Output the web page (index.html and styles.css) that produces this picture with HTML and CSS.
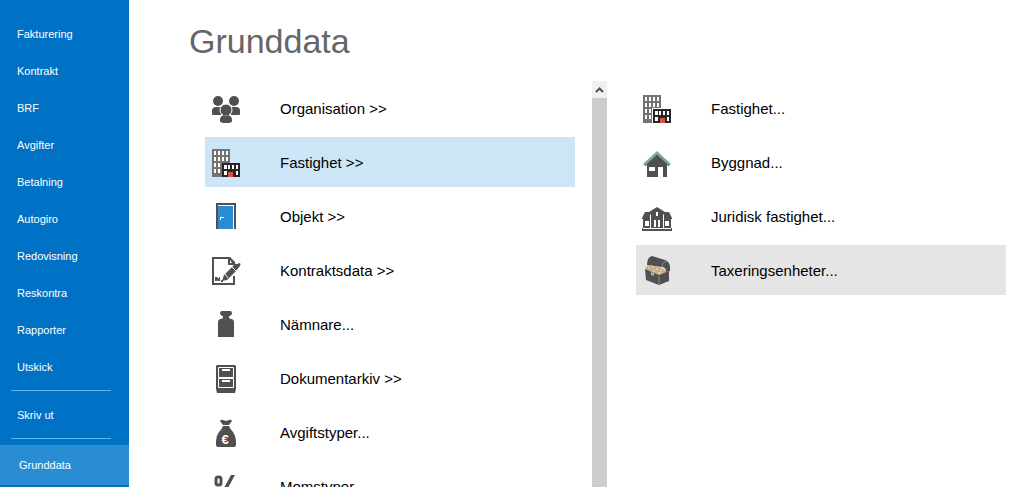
FILE: index.html
```html
<!DOCTYPE html>
<html lang="sv">
<head>
    <meta charset="UTF-8">
    <meta name="viewport" content="width=device-width, initial-scale=1.0">
    <title>Grunddata</title>
    <link rel="stylesheet" href="styles.css">
</head>
<body>
    <nav class="sidebar">
        <a href="#">Fakturering</a>
        <a href="#">Kontrakt</a>
        <a href="#">BRF</a>
        <a href="#">Avgifter</a>
        <a href="#">Betalning</a>
        <a href="#">Autogiro</a>
        <a href="#">Redovisning</a>
        <a href="#">Reskontra</a>
        <a href="#">Rapporter</a>
        <a href="#">Utskick</a>
        <hr>
        <a href="#">Skriv ut</a>
        <hr>
        <a href="#" class="active">Grunddata</a>
    </nav>

    <main class="content">
        <h1>Grunddata</h1>
        <div class="panels">
            <div class="menu">
                <a href="#" class="menu-item">
                    <svg class="icon" viewBox="0 0 32 32">
                        <circle cx="8" cy="9" r="5"/>
                        <circle cx="24" cy="9" r="5"/>
                        <path d="M2 22v-3q0-4 4-4h5v8H3q-1 0-1-1zM30 22v-3q0-4-4-4h-5v8h8q1 0 1-1z"/>
                        <circle class="halo" cx="16" cy="18" r="6"/>
                        <path d="M10 28q0-4 4-5q2 1 4 0q4 1 4 5v1q0 2-6 2t-6-2z"/>
                    </svg>
                    <span>Organisation &gt;&gt;</span>
                </a>
                <a href="#" class="menu-item selected">
                    <svg class="icon" viewBox="0 0 32 32">
                        <path class="grey" d="M2 3h18v28H2z"/>
                        <path class="white" d="M4 5h2v4H4zM8 5h2v4H8zM12 5h2v4h-2zM16 5h2v4h-2zM4 11h2v4H4zM8 11h2v4H8zM12 11h2v4h-2zM16 11h2v4h-2zM4 17h2v4H4zM8 17h2v4H8zM4 23h2v4H4zM8 23h2v4H8z"/>
                        <path class="black" d="M12 17h18v14H12z"/>
                        <path class="white" d="M14 19h3v4h-3zM18 19h2v4h-2zM22 19h2v4h-2zM26 19h2v4h-2zM14 25h3v4h-3zM26 25h2v4h-2z"/>
                        <path class="red" d="M18 26h5v5h-5z"/>
                    </svg>
                    <span>Fastighet &gt;&gt;</span>
                </a>
                <a href="#" class="menu-item">
                    <svg class="icon" viewBox="0 0 32 32">
                        <path d="M6 3h20v26H6z"/>
                        <path class="white" d="M8 5h16v24H8z"/>
                        <path class="blue" d="M8 6h15v23H8z"/>
                        <path class="white" d="M10 17h4v1h-3v2h-1z"/>
                    </svg>
                    <span>Objekt &gt;&gt;</span>
                </a>
                <a href="#" class="menu-item">
                    <svg class="icon" viewBox="0 0 32 32">
                        <path class="line" d="M24 22v8H3V4h16l5 5"/>
                        <path d="M18 3h2l5 5v3h-7z"/>
                        <path class="white" d="M20 6l2 3h-2z"/>
                        <path d="M12 27l2-6 10-10q2-2 3-1l3-1q1 1 0 3l-4 5-3 3-6 6z"/>
                        <path class="thin-white" d="M15 20l3 4M22 13l4 4"/>
                        <path d="M5 23h2l2 2v-2h1v4H8l-1-1v1H5zM11 26h2v2h-2z"/>
                    </svg>
                    <span>Kontraktsdata &gt;&gt;</span>
                </a>
                <a href="#" class="menu-item">
                    <svg class="icon" viewBox="0 0 32 32">
                        <path d="M12 3h8q2 0 2 2t-2 3h-1v1q0 2 2 2h1q2 1 2 3v15H8V14q0-2 2-3h1q2 0 2-2V8h-1q-2-1-2-3t2-2z"/>
                    </svg>
                    <span>Nämnare...</span>
                </a>
                <a href="#" class="menu-item">
                    <svg class="icon" viewBox="0 0 32 32">
                        <path d="M7 3h18l1 1v23l-1 4H7l-1-4V4z"/>
                        <path class="thin-white" d="M8.500 5.500h15v10h-15zM8.500 16.500h15v9h-15z"/>
                        <path class="white" d="M12 7h8v2h-8zM12 18h8v2h-8z"/>
                    </svg>
                    <span>Dokumentarkiv &gt;&gt;</span>
                </a>
                <a href="#" class="menu-item">
                    <svg class="icon" viewBox="0 0 32 32">
                        <path d="M10 5q1-2 3-1l3 1 3-1q2-1 3 1l-3 4h-6z"/>
                        <path d="M13 10h6q1 3 4 6 3 4 3 9v4q0 2-2 2H8q-2 0-2-2v-4q0-5 3-9 3-3 4-6z"/>
                        <text class="euro" x="15" y="28">€</text>
                    </svg>
                    <span>Avgiftstyper...</span>
                </a>
                <a href="#" class="menu-item">
                    <svg class="icon" viewBox="0 0 32 32">
                        <rect class="ring" x="6" y="7" width="5" height="8" rx="2"/>
                        <rect class="ring" x="20" y="19" width="5" height="8" rx="2"/>
                        <path d="M21 5h4L12 29H8z"/>
                    </svg>
                    <span>Momstyper...</span>
                </a>
            </div>

            <div class="scrollbar">
                <button type="button" aria-label="Rulla upp">
                    <svg viewBox="0 0 9 6"><path d="M1 5l3.500-3.500L8 5"/></svg>
                </button>
                <div class="thumb"></div>
            </div>

            <div class="menu submenu">
                <a href="#" class="menu-item">
                    <svg class="icon" viewBox="0 0 32 32">
                        <path class="grey" d="M2 3h18v28H2z"/>
                        <path class="white" d="M4 5h2v4H4zM8 5h2v4H8zM12 5h2v4h-2zM16 5h2v4h-2zM4 11h2v4H4zM8 11h2v4H8zM12 11h2v4h-2zM16 11h2v4h-2zM4 17h2v4H4zM8 17h2v4H8zM4 23h2v4H4zM8 23h2v4H8zM11 16h9v1h-8v14h-1z"/>
                        <path class="black" d="M12 17h18v14H12z"/>
                        <path class="white" d="M14 19h3v4h-3zM18 19h2v4h-2zM22 19h2v4h-2zM26 19h2v4h-2zM14 25h3v4h-3zM26 25h2v4h-2z"/>
                        <path class="red" d="M19 26h5v5h-5z"/>
                    </svg>
                    <span>Fastighet...</span>
                </a>
                <a href="#" class="menu-item">
                    <svg class="icon" viewBox="0 0 32 32">
                        <path d="M6 18L16 9l10 9v13h-4V21h-5v10H6z"/>
                        <path class="white" d="M8 21h6v4H8z"/>
                        <path class="roof" d="M3 19L16 7l13 12"/>
                        <path class="thin" d="M4 20L16 9l12 11"/>
                    </svg>
                    <span>Byggnad...</span>
                </a>
                <a href="#" class="menu-item">
                    <svg class="icon" viewBox="0 0 32 32">
                        <path d="M16 7l8 5h4l3 6v1h-1v9h1v3H1v-3h1v-9H1v-1l3-6h4z"/>
                        <path class="white" d="M9 15l1-1v14H9zM22 14l1 1v13h-1zM2 28h28v1H2z"/>
                        <path class="white" d="M13 20h2v7h-2zM17 20h2v7h-2zM4 21h4v5H4zM24 21h4v5h-4zM15 12h2v4h-2z"/>
                    </svg>
                    <span>Juridisk fastighet...</span>
                </a>
                <a href="#" class="menu-item hover">
                    <svg class="icon" viewBox="0 0 32 32">
                        <path d="M6 11q0-8 5-9l13 4q5 2 5 7v4l-4 1q0-5-4-5z"/>
                        <path class="crack" d="M21 13q1-6 5-6"/>
                        <path class="gold" d="M6 12l3-1 12 3 4 3v2l-7 2-14-6z"/>
                        <path class="sparks" d="M7 14h2M11 13h2M15 15h2M19 16h2M12 17h2M17 19h3"/>
                        <path d="M4 15l14 6v10L5 26zM18 21l10-4v10l-10 4z"/>
                        <path class="crack" d="M18 22v9"/>
                        <path class="gold" d="M10 18l3 1v3l-3-1z"/>
                    </svg>
                    <span>Taxeringsenheter...</span>
                </a>
            </div>
        </div>
    </main>
</body>
</html>
```

FILE: styles.css
```css
* {
    box-sizing: border-box;
}
body {
    font-family: "Liberation Sans", Arial, sans-serif;
    background-color: #fff;
    color: #000;
    margin: 0;
    display: flex;
    height: 100vh;
    overflow: hidden;
}
a {
    color: inherit;
    text-decoration: none;
}

/* Sidebar */
.sidebar {
    flex: 0 0 129px;
    padding-top: 16px;
    background-color: #0072c6;
    color: #fff;
    font-size: 11px;
}
.sidebar a {
    display: block;
    padding-left: 17px;
    line-height: 37px;
}
.sidebar hr {
    width: 100px;
    height: 1px;
    margin: 4px 0 6px 11px;
    border: none;
    background-color: #5cb8f0;
}
.sidebar .active {
    padding-left: 19px;
    line-height: 40px;
    background-color: #2a8dd4;
}

/* Content */
.content {
    flex: 1;
    min-width: 0;
    display: flex;
    flex-direction: column;
    padding: 21px 4px 0 60px;
}
h1 {
    margin: 0 0 20px;
    color: #666;
    font-size: 34px;
    font-weight: normal;
    line-height: 40px;
}
.panels {
    flex: 1;
    min-height: 0;
    display: flex;
    padding-left: 16px;
}
.menu {
    flex: 1;
    min-width: 0;
    display: flex;
    flex-direction: column;
    gap: 4px;
    margin-right: 17px;
    padding-top: 2px;
    overflow: hidden;
}
.submenu {
    margin: 0 0 0 29px;
}
.menu-item {
    flex: 0 0 50px;
    display: flex;
    align-items: center;
    gap: 38px;
    padding-left: 5px;
    font-size: 15px;
}
.menu-item.selected {
    background-color: #cde6f7;
}
.menu-item.hover {
    background-color: #e5e5e5;
}

/* Scrollbar */
.scrollbar {
    flex: 0 0 15px;
    display: flex;
    flex-direction: column;
    background-color: #f0f0f0;
}
.scrollbar button {
    display: flex;
    justify-content: center;
    align-items: center;
    height: 17px;
    padding: 0;
    border: none;
    background-color: #f0f0f0;
}
.scrollbar svg {
    width: 9px;
    height: 6px;
    fill: none;
    stroke: #505050;
    stroke-width: 2;
}
.thumb {
    flex: 1;
    background-color: #cdcdcd;
}

/* Icons */
.icon {
    flex: none;
    width: 32px;
    height: 32px;
    fill: #505050;
}
.icon .white {
    fill: #fff;
}
.icon .grey {
    fill: #737373;
}
.icon .black {
    fill: #262626;
}
.icon .red {
    fill: #d0583c;
}
.icon .blue {
    fill: #2a8dd4;
}
.icon .gold {
    fill: #c9ab86;
}
.icon .halo {
    stroke: #fff;
    stroke-width: 1;
}
.icon .euro {
    fill: #fff;
    font-size: 13px;
    font-weight: bold;
    text-anchor: middle;
}
.icon .line,
.icon .ring,
.icon .thin,
.icon .thin-white,
.icon .roof,
.icon .sparks,
.icon .crack {
    fill: none;
    stroke: #505050;
    stroke-width: 2;
}
.icon .ring {
    stroke-width: 3;
}
.icon .thin {
    stroke-width: 1;
}
.icon .thin-white {
    stroke: #fff;
    stroke-width: 1;
}
.icon .roof {
    stroke: #7fa99b;
    stroke-width: 3;
}
.icon .sparks {
    stroke: #f3e6d0;
    stroke-width: 1;
}
.icon .crack {
    stroke: #8a8a8a;
    stroke-width: 1;
}
```
